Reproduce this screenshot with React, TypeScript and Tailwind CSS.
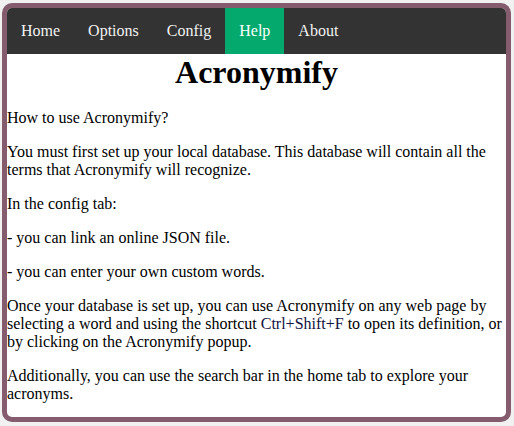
export default function App() {
  const tabs = ["Home", "Options", "Config", "Help", "About"];

  return (
    <div className="min-h-screen bg-[#f1f1f1] pt-[3px] pl-[2px] pr-[3px] pb-[4px] font-['Liberation_Serif',serif]">
      <div className="h-[419px] border-[5px] border-[#845c6e] rounded-[10px] bg-white overflow-hidden text-black">
        {/* Top nav */}
        <nav className="flex bg-[#333333]">
          {tabs.map((t) => (
            <a
              key={t}
              className={
                "px-[14px] py-[14px] text-[16px] leading-[normal] text-[#f2f2f2] " +
                (t === "Help" ? "bg-[#04aa6d] text-white" : "")
              }
            >
              {t}
            </a>
          ))}
        </nav>

        {/* Help content */}
        <h1 className="text-center text-[32px] leading-[normal] font-bold mb-[18px]">
          Acronymify
        </h1>
        <div className="text-[16px] leading-[normal]">
          <p className="mb-4">How to use Acronymify?</p>
          <p className="mb-4">
            You must first set up your local database. This database will
            contain all the terms that Acronymify will recognize.
          </p>
          <p className="mb-4">In the config tab:</p>
          <p className="mb-4">- you can link an online JSON file.</p>
          <p className="mb-4">- you can enter your own custom words.</p>
          <p className="mb-4">
            Once your database is set up, you can use Acronymify on any web page
            by selecting a word and using the shortcut{" "}
            <span className="text-[#12123f]">Ctrl+Shift+F</span> to open its
            definition, or by clicking on the Acronymify popup.
          </p>
          <p className="mb-4">
            Additionally, you can use the search bar in the home tab to explore
            your acronyms.
          </p>
        </div>
      </div>
    </div>
  );
}
